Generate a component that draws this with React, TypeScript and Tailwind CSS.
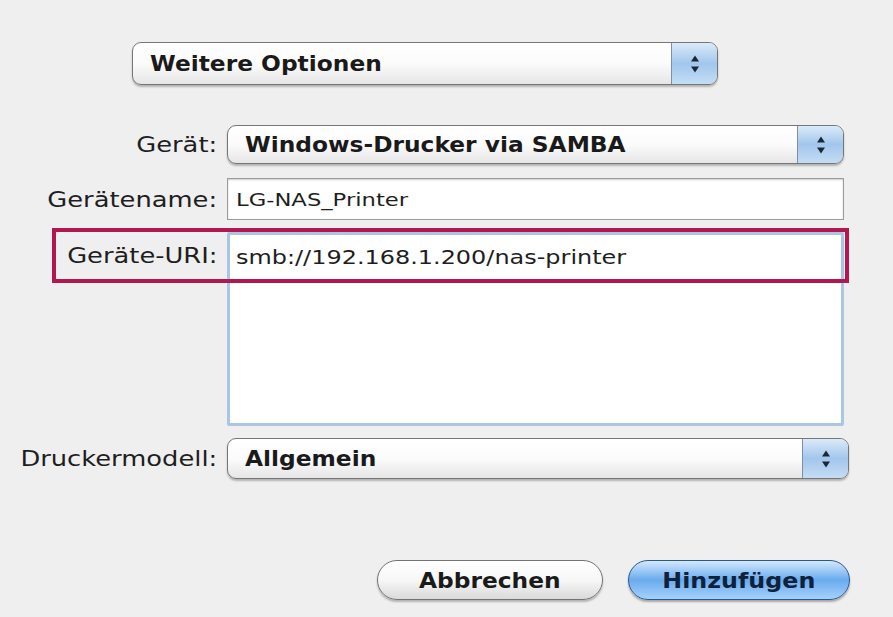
import React from "react";

const font = { fontFamily: '"DejaVu Sans", "Liberation Sans", sans-serif' };

function Stepper() {
  return (
    <div className="flex h-full w-[46px] shrink-0 items-center justify-center rounded-r-[8px] border-l border-[#7f8ea3] bg-gradient-to-b from-[#dbeaf9] via-[#a2c6ec] to-[#c4ddf5]">
      <svg width="12" height="22" viewBox="0 0 12 22">
        <path d="M6 2.5 L10 8.5 L2 8.5 Z" fill="#1c2736" />
        <path d="M6 19.5 L10 13.5 L2 13.5 Z" fill="#1c2736" />
      </svg>
    </div>
  );
}

function Popup({ label, className }: { label: string; className: string }) {
  return (
    <div
      className={`flex items-center overflow-hidden rounded-[9px] border-[1.5px] border-[#767676] bg-gradient-to-b from-white via-[#fbfbfb] to-[#e6e6e6] shadow-[0_2px_2px_rgba(0,0,0,0.25)] ${className}`}
    >
      <div className="flex-1 pl-[17px]">
        <span className="inline-block origin-left scale-x-[1.06] whitespace-nowrap text-[22px] font-bold text-[#1a1a1a]">
          {label}
        </span>
      </div>
      <Stepper />
    </div>
  );
}

function Label({ children }: { children: React.ReactNode }) {
  return (
    <span className="inline-block origin-right scale-x-[1.17] whitespace-nowrap text-right text-[22px] text-[#1e1e1e]">
      {children}
    </span>
  );
}

function FieldText({ children, size }: { children: React.ReactNode; size: string }) {
  return (
    <span className={`inline-block origin-left scale-x-[1.26] whitespace-nowrap text-[#1e1e1e] ${size}`}>
      {children}
    </span>
  );
}

export default function App() {
  return (
    <div className="relative h-[617px] w-[893px] overflow-hidden bg-[#efefef]" style={font}>
      <div className="pl-[132px] pt-[42px]">
        <Popup label="Weitere Optionen" className="h-[43px] w-[586px]" />
      </div>

      <div className="mt-[40px] grid grid-cols-[217px_617px] gap-x-[10px]">
        <div className="flex h-[38px] items-center justify-end">
          <Label>Gerät:</Label>
        </div>
        <Popup label="Windows-Drucker via SAMBA" className="h-[39px]" />

        <div className="mt-[14px] flex h-[42px] items-center justify-end">
          <Label>Gerätename:</Label>
        </div>
        <div className="mt-[14px] flex h-[42px] items-center border border-[#9b9b9b] bg-white pl-[8px] shadow-[inset_0_1px_2px_rgba(0,0,0,0.2)]">
          <FieldText size="text-[18px]">LG-NAS_Printer</FieldText>
        </div>

        <div className="mt-[12px] flex h-[46px] items-center justify-end">
          <Label>Geräte-URI:</Label>
        </div>
        <div className="mt-[12px] h-[194px] rounded-[2px] border-[3px] border-[#a9c6e6] bg-white pl-[6px] pt-[8px]">
          <FieldText size="text-[19px]">smb://192.168.1.200/nas-printer</FieldText>
        </div>

        <div className="mt-[12px] flex h-[40px] items-center justify-end">
          <Label>Druckermodell:</Label>
        </div>
        <Popup label="Allgemein" className="mt-[12px] h-[41px] w-[622px]" />
      </div>

      <div className="mt-[81px] flex justify-end gap-[25px] pr-[43px]">
        <button className="h-[40px] w-[226px] rounded-full border-[1.5px] border-[#737373] bg-gradient-to-b from-white via-[#f7f7f7] to-[#dadada] shadow-[0_2px_2px_rgba(0,0,0,0.25)]">
          <span className="inline-block scale-x-[1.06] text-[22px] font-bold text-[#1a1a1a]">Abbrechen</span>
        </button>
        <button className="h-[40px] w-[222px] rounded-full border-[1.5px] border-[#2a5790] bg-gradient-to-b from-[#d3e8fc] via-[#68abee] to-[#a6d1fa] shadow-[0_2px_2px_rgba(0,0,0,0.3)]">
          <span className="inline-block scale-x-[1.08] text-[22px] font-bold text-[#0f223b]">Hinzufügen</span>
        </button>
      </div>

      <div className="pointer-events-none absolute left-[52px] top-[228px] h-[55px] w-[797px] border-[4px] border-[#b3174f]" />
    </div>
  );
}
